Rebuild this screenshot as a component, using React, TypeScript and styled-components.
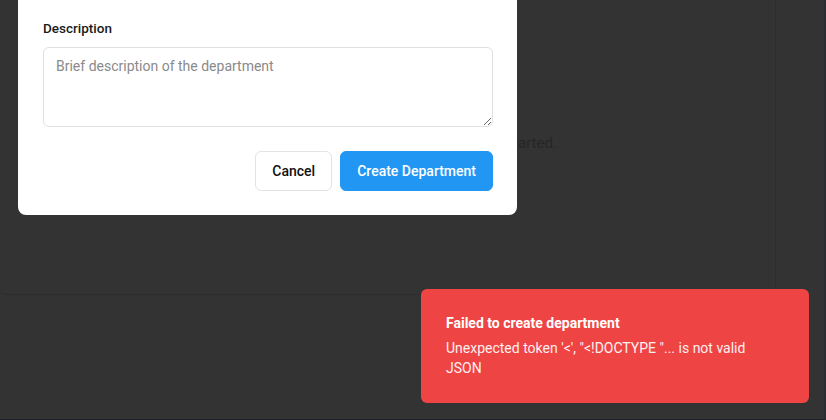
import React from "react";
import styled, { createGlobalStyle } from "styled-components";

const GlobalStyle = createGlobalStyle`
  html, body {
    margin: 0;
    padding: 0;
    height: 100%;
    background: #333333;
  }
  #root {
    height: 100%;
  }
  * {
    box-sizing: border-box;
  }
`;

const Screen = styled.div`
  position: relative;
  display: flex;
  width: 826px;
  height: 420px;
  overflow: hidden;
  font-family: Roboto, "Noto Sans", sans-serif;
  background: #333333;
  border-right: 2px solid #2a2e33;
  border-bottom: 1px solid #1b2026;
`;

const Main = styled.div`
  flex: 0 0 776px;
  display: flex;
  flex-direction: column;
`;

const Card = styled.div`
  height: 295px;
  display: flex;
  align-items: flex-start;
  justify-content: center;
  padding-top: 132px;
  border-right: 1px solid #2e2e2e;
  border-bottom: 1px solid #2c2c2c;
  border-bottom-left-radius: 6px;
`;

const EmptyText = styled.p`
  margin: 0 0 0 54px;
  font-size: 15px;
  line-height: 22px;
  color: #262626;
`;

const SideStrip = styled.div`
  flex: 1;
`;

const Modal = styled.div`
  position: absolute;
  left: 18px;
  top: -20px;
  width: 499px;
  height: 235px;
  padding: 38px 24px 24px 25px;
  background: #ffffff;
  border-radius: 8px;
  display: flex;
  flex-direction: column;
`;

const Label = styled.label`
  display: block;
  font-size: 13.5px;
  font-weight: 500;
  line-height: 18px;
  color: #1a1a1a;
  margin: 1px 0 10px;
`;

const TextArea = styled.textarea`
  display: block;
  width: 450px;
  height: 80px;
  padding: 8px 12px;
  border: 1px solid #e0e0e0;
  border-radius: 6px;
  font-family: inherit;
  font-size: 14px;
  line-height: 20px;
  color: #1a1a1a;
  resize: vertical;
  outline: none;

  &::placeholder {
    color: #8a8a8a;
  }
`;

const Actions = styled.div`
  display: flex;
  justify-content: flex-end;
  gap: 8px;
  margin-top: 24px;
`;

const Button = styled.button<{ $primary?: boolean }>`
  height: 40px;
  padding: 0 16px;
  border-radius: 6px;
  font-family: inherit;
  font-size: 14px;
  font-weight: 500;
  cursor: pointer;
  border: 1px solid ${(p) => (p.$primary ? "#2196f3" : "#e3e3e3")};
  background: ${(p) => (p.$primary ? "#2196f3" : "#ffffff")};
  color: ${(p) => (p.$primary ? "#ffffff" : "#111111")};
`;

const Toast = styled.div`
  position: absolute;
  left: 421px;
  top: 289px;
  width: 388px;
  height: 114px;
  padding: 24px 25px;
  background: #ef4444;
  border-radius: 6px;
  color: #ffffff;
  font-size: 14px;
`;

const ToastTitle = styled.div`
  font-weight: 700;
  line-height: 20px;
  margin-bottom: 5px;
`;

const ToastMessage = styled.div`
  line-height: 20px;
  color: #fdf0f0;
`;

export default function App() {
  return (
    <>
      <GlobalStyle />
      <Screen>
        <Main>
          <Card>
            <EmptyText>Create your first department to get started.</EmptyText>
          </Card>
        </Main>
        <SideStrip />
        <Modal>
          <Label htmlFor="dept-description">Description</Label>
          <TextArea
            id="dept-description"
            placeholder="Brief description of the department"
          />
          <Actions>
            <Button>Cancel</Button>
            <Button $primary>Create Department</Button>
          </Actions>
        </Modal>
        <Toast>
          <ToastTitle>Failed to create department</ToastTitle>
          <ToastMessage>
            Unexpected token '&lt;', "&lt;!DOCTYPE "... is not valid JSON
          </ToastMessage>
        </Toast>
      </Screen>
    </>
  );
}
